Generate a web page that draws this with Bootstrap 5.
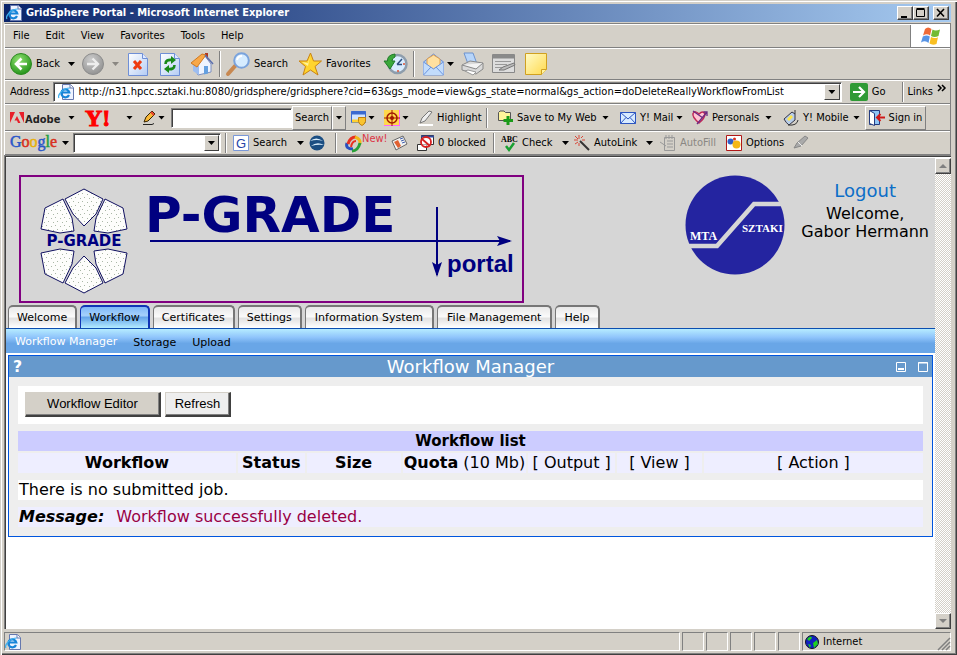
<!DOCTYPE html>
<html lang="en">
<head>
<meta charset="utf-8">
<meta name="viewport" content="width=device-width, initial-scale=1">
<title>GridSphere Portal - Microsoft Internet Explorer</title>
<link rel="stylesheet" href="https://cdn.jsdelivr.net/npm/bootstrap@5.3.0/dist/css/bootstrap.min.css">
<style>
:root{--face:#d4d0c8;--shade:#808080;--deep:#404040}
body{font:11px/14px "DejaVu Sans Condensed","DejaVu Sans",sans-serif;color:#000;background:var(--face);overflow:hidden}
button,input{font:inherit;color:inherit;border:0;background:none;padding:0;border-radius:0;min-width:0}
a{color:inherit;text-decoration:none}
svg{display:block;flex:none;overflow:visible}
.win{border:solid var(--face);border-width:1px 0 0 1px;box-shadow:inset 1px 1px #fff,inset -1px -1px var(--deep),inset -2px -2px var(--shade);padding:3px 6px 3px 3px}
.titlebar{height:18px;background:linear-gradient(90deg,#0a246a,#a6caf0);color:#fff;font:bold 11px/18px "DejaVu Sans Condensed",sans-serif;padding:0 2px}
.winbtn{width:16px;height:14px;background:var(--face);border:1px solid;border-color:#fff var(--deep) var(--deep) #fff;box-shadow:inset -1px -1px var(--shade);display:grid;place-items:center}
.bars{border:1px solid var(--shade);border-left-color:#fff;border-bottom:0;margin-top:1px}
.bar{border-top:1px solid #fff;border-bottom:1px solid var(--shade);padding-left:5px;white-space:nowrap}
.slots{display:grid;align-items:center}
.slots>*{display:flex;align-items:center;gap:4px;text-align:left}
.menu{height:24px;padding-left:0}
.menu a{padding:0 8px}
.flag{width:40px;background:#fff;border-left:1px solid var(--shade)}
.nav-bar{height:32px;grid-template-columns:58px 14px 30px 16px 32px 30px 29px 7px 72px 86px 29px 10px 24px 14px 31px 33px 1fr}
.addr-bar{height:24px}
.y-bar{height:27px;grid-template-columns:58px 15px 43px 16px 16px 13px 121px 40px 18px 18px 16px 18px 16px 68px 12px 104px 18px 56px 16px 73px 18px 70px 12px 61px 1fr}
.g-bar{height:24px;grid-template-columns:52px 11px 148px 12px 60px 16px 26px 10px 46px 26px 76px 8px 61px 12px 72px 14px 66px 67px 1fr}
.caret{width:7px;height:4px;background:currentColor;clip-path:polygon(0 0,100% 0,50% 100%)}
.gray{color:#8a8782}
.rule{width:2px;height:26px;background:linear-gradient(90deg,var(--shade) 50%,#fff 50%)}
.rule.short{height:20px}
.sunken{background:#fff;border:1px solid;border-color:var(--shade) #fff #fff var(--shade);box-shadow:inset 1px 1px var(--deep);height:20px}
.drop{width:16px;height:16px;margin:1px;background:var(--face);border:1px solid;border-color:#fff var(--deep) var(--deep) #fff;display:grid;place-items:center}
.raised{height:24px;border:1px solid;border-color:#fff var(--shade) var(--shade) #fff;justify-content:center}
.view{border:1px solid var(--shade);border-width:1px 0 0 1px;box-shadow:inset 1px 1px var(--deep);padding:2px 0 0 1px;background:#fff;min-height:0}
.vbar{width:16px;background:repeating-conic-gradient(#fff 0 25%,var(--face) 0 50%) 0 0/2px 2px}
.vbar .winbtn{height:16px}
.page{font-family:"DejaVu Sans",Verdana,sans-serif}
.head{background:#d6d6d6;padding:17px 6px 0 13px;height:147px}
.logo-box{border:2px solid purple;width:505px;height:128px}
.user{font-size:16px;line-height:18px;text-align:center;padding-top:6px;margin-left:16px}
.user a{color:#0d6ec8;font-size:18px;line-height:20px}
.tabs{background:#d6d6d6;border-bottom:1px solid #0c4eb0;padding-left:2px;gap:3px;white-space:nowrap}
.tabs a{height:23px;padding:0 8px;border:2px solid #777;border-bottom:0;border-width:2px 2px 0 1px;border-radius:5px 5px 0 0;background:linear-gradient(#e8e8e8,#fafafa 45%,#e2e2e2 55%,#fff);line-height:21px}
.tabs a.long{padding:0 9px}
.tabs a.on{border-color:#1035b5;background:linear-gradient(#7fb8f8,#a5d1fc 40%,#66a6ea 50%,#b4ecff)}
.sub{height:24px;padding:4px 9px 0;gap:16px;background:linear-gradient(#b6ecff,#8fc4fb 35%,#69a6e7 60%)}
.sub .on{color:#fff;padding-bottom:3px}
.portlet{margin:2px 2px 0;border:1px solid #0055dd;background:#eee;font-size:16px;line-height:20px}
.p-title{height:21px;background:#69c;color:#fff;font-size:18px;padding:0 4px}
.p-title>a{width:32px}
.p-body{padding:9px;display:grid;gap:7px}
.tools{background:#fff;height:38px;padding:6px 7px;gap:4px;font:13px/16px "Liberation Sans",Arial,sans-serif}
.tools button{height:25px;border:1px solid var(--face);border-right:2px solid var(--deep);border-bottom:2px solid var(--deep)}
.ed{width:136px;background:var(--face);box-shadow:inset -1px -1px var(--shade)}
.rf{width:66px;background:#eee;box-shadow:inset -1px -1px var(--shade)}
.jobs{border-collapse:separate;border-spacing:0;width:100%;table-layout:fixed;white-space:nowrap}
.jobs th,.jobs td{padding:0;text-align:center;background:#eef;font-weight:400}
.jobs thead th{background:#ccf;font-weight:700;font-size:15px}
.jobs tbody tr>*{border:2px solid #eee;border-width:2px 2px 0 0}
.jobs tbody tr>:last-child{border-right:0}
.line{height:20px;padding-left:1px;white-space:nowrap}
.msg{background:#eef}.msg span{color:#990044}
.status{height:20px;margin-top:3px;gap:2px}
.cell{border:1px solid;border-color:var(--shade) #fff #fff var(--shade);height:19px}
.pane{width:22px}
.zone{width:149px;padding:0 0 0 2px}
</style>
<script src="https://cdn.jsdelivr.net/npm/bootstrap@5.3.0/dist/js/bootstrap.bundle.min.js"></script>
</head>
<body>
<svg width="0" height="0" class="position-absolute">
<defs>
<radialGradient id="gr" cx=".4" cy=".3" r=".8"><stop offset="0" stop-color="#8fe070"/><stop offset="1" stop-color="#178a10"/></radialGradient>
<radialGradient id="gy" cx=".4" cy=".3" r=".8"><stop offset="0" stop-color="#ccc"/><stop offset="1" stop-color="#8c8c8c"/></radialGradient>
<linearGradient id="pg" x2="1" y2="1"><stop offset="0" stop-color="#fff"/><stop offset="1" stop-color="#b4ccf4"/></linearGradient>
<linearGradient id="yl" x2="1" y2="1"><stop offset="0" stop-color="#fffbc8"/><stop offset="1" stop-color="#ffd94c"/></linearGradient>
</defs>
<symbol id="ie" viewBox="0 0 16 16"><path d="M4.500 .5h8l3 3v12h-11z" fill="#eef3ff" stroke="#6678ae"/><path d="M12 .5v3.500h3.500" fill="#fff" stroke="#6678ae"/><path d="M11 11A4 4 0 1 1 11.300 8.500H4.500" fill="none" stroke="#1684d8" stroke-width="2.200"/><path d="M1 14C-1 11 5 4 12 4" fill="none" stroke="#40b0ee" stroke-width="1.200"/></symbol>
<symbol id="doc" viewBox="0 0 20 23"><path d="M.5.5h14l5 5v17H.5z" fill="url(#pg)" stroke="#6f8fd6"/><path d="M14.500.5v5h5" fill="#dfe9ff" stroke="#6f8fd6"/></symbol>
<symbol id="mail" viewBox="0 0 16 12"><path d="M.5.5h15v11H.5z" fill="#d9ebff" stroke="#2d55c0"/><path d="M.5.500 8 7l7.500-6.500M.5 11.500 6 5.500M15.500 11.500 10 5.500" fill="none" stroke="#2d55c0"/></symbol>
</svg>
<div class="win d-flex flex-column vh-100">
  <header class="titlebar d-flex align-items-center">
    <svg width="16" height="16"><use href="#ie"/></svg>
    <span class="ps-1 flex-fill">GridSphere Portal - Microsoft Internet Explorer</span>
    <button class="winbtn" aria-label="Minimize"><svg width="10" height="9"><path d="M1 8h6" stroke="#000" stroke-width="2"/></svg></button>
    <button class="winbtn" aria-label="Maximize"><svg width="10" height="10"><path d="M.5 1.500h8v7h-8zM.5.500h8" fill="none" stroke="#000"/></svg></button>
    <button class="winbtn ms-1" aria-label="Close"><svg width="10" height="8"><path d="m1 0 7 7.500M8 0 1 7.500" stroke="#000" stroke-width="1.600"/></svg></button>
  </header>

  <div class="bars">
    <nav class="bar menu d-flex align-items-stretch" aria-label="Menu">
      <div class="d-flex align-items-center flex-fill">
        <a href="#">File</a><a href="#">Edit</a><a href="#">View</a><a href="#">Favorites</a><a href="#">Tools</a><a href="#">Help</a>
      </div>
      <div class="flag d-grid align-content-center justify-content-center">
        <svg width="20" height="18" viewBox="0 0 20 18"><path d="M4 2q3-3 6.500 0L9 8.500q-3-2.500-7 0z" fill="#ef6a36"/><path d="M11.500 2.500q3 2 7.500 0L17.500 9q-4 2-7.500 0z" fill="#72bb34"/><path d="M1.800 9.500q4-2 7 0L7.500 16q-3-3-7.500-.5z" fill="#5793e4"/><path d="M10 10q3.500 2 7 .2L15.500 17q-4 1.500-7-.5z" fill="#f9bf22"/></svg>
      </div>
    </nav>

    <div class="bar slots nav-bar">
      <button><svg width="22" height="22"><circle cx="11" cy="11" r="10.500" fill="url(#gr)" stroke="#2c8a20"/><path d="M11.500 5.500 6 11l5.500 5.500M6.500 11H17" fill="none" stroke="#fff" stroke-width="2.600"/></svg>Back</button>
      <button aria-label="Back history"><i class="caret"></i></button>
      <button aria-label="Forward"><svg width="22" height="22"><circle cx="11" cy="11" r="10.500" fill="url(#gy)" stroke="#8c8c8c"/><path d="M10.500 5.500 16 11l-5.500 5.500M15.500 11H5" fill="none" stroke="#eee" stroke-width="2.400"/></svg></button>
      <button aria-label="Forward history"><i class="caret gray"></i></button>
      <button aria-label="Stop"><svg width="20" height="23"><use href="#doc"/><path d="m6 8 7 8M13 8l-7 8" stroke="#ee3a10" stroke-width="3"/></svg></button>
      <button aria-label="Refresh page"><svg width="20" height="23"><use href="#doc"/><path d="M5.500 11q0-5 7-4" fill="none" stroke="#188a18" stroke-width="2.600"/><path d="m11 3 5 4-5 4z" fill="#188a18"/><path d="M14.500 12q0 5-7 4" fill="none" stroke="#188a18" stroke-width="2.600"/><path d="m9 12-5 4 5 4z" fill="#188a18"/></svg></button>
      <button aria-label="Home"><svg width="24" height="24"><path d="M15 1h3v7h-3z" fill="#b03820"/><path d="M3 12l5 11 13-3V12l-6-8z" fill="#eef4ff" stroke="#7d8fc0"/><path d="M3 12v7l6 4V14z" fill="#9dbdf0"/><path d="M1 11 12 2l4 1-9 12z" fill="#f8a848" stroke="#d07820"/><path d="m15 3 8 9" stroke="#5b6fae" stroke-width="1.500"/><path d="M14 14h4v7.500l-4 1z" fill="#64a0e0"/></svg></button>
      <span class="rule"></span>
      <button><svg width="24" height="24"><path d="m9 14-7 8" stroke="#c88850" stroke-width="4" stroke-linecap="round"/><circle cx="15.500" cy="8.500" r="7.300" fill="#d6ecff" stroke="#7aa3dc" stroke-width="2"/><path d="M11 8q1-4 5-4" fill="none" stroke="#fff" stroke-width="2"/></svg>Search</button>
      <button><svg width="24" height="24"><path d="m12.500 1 3 8h8l-6.500 5.500 3 8.500-7.500-5L5 23l2.500-8.500L1 9h8z" fill="#ffd42e" stroke="#c98312"/><path d="m12 4-2 7-6-1 6 4" fill="#fff299"/></svg>Favorites</button>
      <button aria-label="History"><svg width="24" height="24"><circle cx="13.500" cy="12" r="9" fill="#d9edff" stroke="#8e9dac" stroke-width="2.500"/><path d="M13 12.500 18 7M13 12.500h5" stroke="#2f4f7f" stroke-width="1.500"/><circle cx="14" cy="19" r="1" fill="#e05030"/><circle cx="20" cy="12" r="1" fill="#e05030"/><path d="M11 2Q3 3 3.500 9H0l6 8 5-8H8q0-3 3-4z" fill="#3ba93a" stroke="#20792a"/></svg></button>
      <span class="rule"></span>
      <button aria-label="Mail"><svg width="21" height="23"><path d="m.5 9 10-8 10 8v13H.5z" fill="#a8ccf6" stroke="#6d8fd4"/><path d="M4 6 10.500 2 17 6v6l-6.500 4L4 12z" fill="#ffe0a0" stroke="#e0a050"/><path d="m.5 9 10 7 10-7v13H.5z" fill="#c2dcfb"/><path d="m.5 9 10 7 10-7M.5 22l7.500-8M20.500 22 13 14" fill="none" stroke="#6d95de"/></svg></button>
      <button aria-label="Mail menu"><i class="caret"></i></button>
      <button aria-label="Print"><svg width="24" height="24"><path d="M3 1h9l4 11H7z" fill="#b7d5fa" stroke="#6d93cf"/><path d="m1 13 8-4 13 2v6l-7 5-14-4z" fill="#d9d9d9" stroke="#888"/><path d="m1 13 14 4 7-6" fill="#f3f3f3" stroke="#888"/><path d="m4 19 3-1 8 2-3 3z" fill="#fff" stroke="#999"/></svg></button>
      <button aria-label="Edit"><svg width="24" height="20"><path d="M.5.5h22v18H.5z" fill="#ddd" stroke="#888"/><path d="M1 2.500h21" stroke="#8a8a8a" stroke-width="4"/><path d="M3 7.500h16M3 10.500h12M3 13.500h7" stroke="#999"/><path d="m7 16 4-3 11-4 1 2-11 5z" fill="#bbb" stroke="#777"/></svg></button>
      <button aria-label="Discuss"><svg width="23" height="22"><path d="M.5.5h21v16l-5 5H.5z" fill="url(#yl)" stroke="#d0a020"/><path d="M16.500 21.500v-5h5" fill="#fff3a0" stroke="#d0a020"/></svg></button>
    </div>

    <div class="bar addr-bar d-flex align-items-center">
      <label for="addr" class="pe-1">Address</label>
      <div class="sunken d-flex flex-fill align-items-center ps-1">
        <svg width="16" height="16"><use href="#ie"/></svg>
        <input id="addr" class="flex-fill ps-1" value="http://n31.hpcc.sztaki.hu:8080/gridsphere/gridsphere?cid=63&amp;gs_mode=view&amp;gs_state=normal&amp;gs_action=doDeleteReallyWorkflowFromList">
        <button class="drop" aria-label="Address list"><i class="caret"></i></button>
      </div>
      <button class="d-flex align-items-center gap-1 ms-2 pe-3"><svg width="18" height="18"><rect width="18" height="18" rx="2" fill="#2f9a35"/><path d="M3 9h11M9 4l5 5-5 5" fill="none" stroke="#fff" stroke-width="2.200"/></svg>Go</button>
      <span class="rule short"></span>
      <a href="#" class="px-1">Links</a>
      <button class="pe-1 pb-2" aria-label="More links"><svg width="9" height="6"><path d="m1 0 3 3-3 3M5 0l3 3-3 3" fill="none" stroke="#000" stroke-width="1.500"/></svg></button>
    </div>

    <div class="bar slots y-bar">
      <button aria-label="Adobe"><svg width="52" height="16"><path d="M0 2h5L0 13zM9 2h5v11zM7 6l3.500 7H8L7 10.500H4.500z" fill="#e8202a"/><text x="15" y="13" font-family="DejaVu Sans Condensed" font-weight="bold" font-size="11" fill="#222">Adobe</text></svg></button>
      <button aria-label="Adobe menu"><i class="caret"></i></button>
      <button aria-label="Yahoo"><svg width="34" height="24"><text x="2" y="20" font-family="Liberation Serif" font-weight="bold" font-size="24" fill="#f00" stroke="#f00">Y!</text></svg></button>
      <button aria-label="Yahoo menu"><i class="caret"></i></button>
      <button aria-label="Edit toolbar"><svg width="15" height="16"><path d="M2 12 4 7l6-6 3 3-7 7z" fill="#f8b838" stroke="#332200"/><path d="m9 2 3 3" stroke="#e84030" stroke-width="2"/><path d="M1 14.500h9l2-1" stroke="#222" fill="none"/></svg></button>
      <button aria-label="Edit menu"><i class="caret"></i></button>
      <input class="sunken w-100 px-1" aria-label="Yahoo search">
      <button class="raised">Search</button>
      <button class="raised me-1" aria-label="Search menu"><i class="caret"></i></button>
      <button aria-label="Pop-up blocker"><svg width="17" height="16"><path d="M1.500 1.500h14v11h-14z" fill="#cfe3ff" stroke="#3a6ad0"/><path d="M1 3h15" stroke="#3a6ad0" stroke-width="3"/><path d="M2 11h8" stroke="#ffd030" stroke-width="3"/><path d="M8.500 7.500h7v4q-1 3-3.500 4-3-1-3.500-4z" fill="#f9c430" stroke="#c08010"/></svg></button>
      <button aria-label="Pop-up menu"><i class="caret"></i></button>
      <button aria-label="Anti-spy"><svg width="16" height="16"><path fill="#ffd84c" d="M0 0h16v16H0z"/><path d="M15.500 0v16M0 15.500h16" stroke="#f6f"/><circle cx="8" cy="8" r="5" fill="none" stroke="#a01800" stroke-width="1.500"/><circle cx="8" cy="8" r="2" fill="#a01800"/><path d="M8 0v16M0 8h16" stroke="#a01800"/></svg></button>
      <button aria-label="Anti-spy menu"><i class="caret"></i></button>
      <button><svg width="15" height="16"><path d="m2 13 2-5 7-7 3 1-7 9z" fill="#eee" stroke="#777"/><path d="M0 15h15" stroke="#fff" stroke-width="2"/></svg>Highlight</button>
      <span class="rule short"></span>
      <button><svg width="15" height="16"><path d="M.5 2.500 2 1h4l1.500 1.500h5v8H.5z" fill="#fff59a" stroke="#555"/><path d="M10 6v9M5.500 10.500H15" stroke="#1a9a18" stroke-width="3"/></svg>Save to My Web</button>
      <button aria-label="My Web menu"><i class="caret"></i></button>
      <button><svg width="16" height="12"><use href="#mail"/></svg>Y! Mail</button>
      <button aria-label="Mail menu"><i class="caret"></i></button>
      <button><svg width="16" height="15"><path d="M7 13Q0 7 1 3.500 3 0 7 4q4-4 6 0 0 4-6 9z" fill="#ffc6d4" stroke="#c02858" stroke-width="1.500"/><path d="M1 1l10 7M5 14 15 2M11.500 2H15v4" fill="none" stroke="#6a2a80" stroke-width="1.300"/></svg>Personals</button>
      <button aria-label="Personals menu"><i class="caret"></i></button>
      <button><svg width="16" height="16"><path d="m1 9 8-7 3 2v6l-6 5q-3-2-5-6z" fill="#b8cde8" stroke="#334"/><path d="m4 9 4-4 2 2-4 4z" fill="#ffe648"/><path d="M12 4V0M5 15q9 1 10-5" stroke="#333" fill="none"/></svg>Y! Mobile</button>
      <button aria-label="Mobile menu"><i class="caret"></i></button>
      <button class="raised"><svg width="16" height="16"><path d="M.5.5h10v14H.5z" fill="#8fc4f4" stroke="#223a80"/><path d="m.5.5 5 3v12l-5-2z" fill="#fff" stroke="#223a80"/><path d="M16 7.500H8M11.500 4 8 7.500l3.500 3.500" stroke="#d01818" stroke-width="2" fill="none"/></svg>Sign in</button>
    </div>

    <div class="bar slots g-bar">
      <button aria-label="Google"><svg width="49" height="20"><text y="14" font-family="Liberation Serif" font-size="16" stroke-width=".5"><tspan fill="#2a56c8" stroke="#2a56c8">G</tspan><tspan fill="#d83020" stroke="#d83020">o</tspan><tspan fill="#e8b010" stroke="#e8b010">o</tspan><tspan fill="#2a56c8" stroke="#2a56c8">g</tspan><tspan fill="#20a040" stroke="#20a040">l</tspan><tspan fill="#d83020" stroke="#d83020">e</tspan></text></svg></button>
      <button aria-label="Google menu"><i class="caret"></i></button>
      <div class="sunken"><input class="flex-fill px-1" aria-label="Google search"><button class="drop" aria-label="Search history"><i class="caret"></i></button></div>
      <span class="rule short ms-1"></span>
      <button><svg width="16" height="16"><path d="M.5.5h15v15H.5z" fill="#fff" stroke="#7a98d8"/><text x="3" y="13" font-family="Liberation Sans" font-size="13" fill="#2444a8">G</text></svg>Search</button>
      <button class="ps-1" aria-label="Search type"><i class="caret"></i></button>
      <button aria-label="Earth"><svg width="16" height="16"><circle cx="8" cy="8" r="7.500" fill="#1b4e82"/><path d="M1 6q6-5 13 0-6-2-13 0M2 11q6-5 13-1-6-1-13 1" fill="#d8ecfa"/></svg></button>
      <span class="rule short"></span>
      <button class="gap-0"><svg width="17" height="17" fill="none" stroke-width="3"><path d="M8 14Q0 14 2 8" stroke="#2850c0"/><path d="M3 9q2-7 8-7" stroke="#e83020"/><path d="M10 2q6 2 5 7" stroke="#f0b818"/><path d="M15 8q-2 8-8 8" stroke="#28a038"/><path d="M6 12q1-6 5-6" stroke="#e83020" stroke-width="2"/></svg><span class="text-danger pb-2">New!</span></button>
      <button aria-label="News"><svg width="17" height="16"><path d="m1 6 11-5 4 8-11 6z" fill="#f1f1f1" stroke="#666"/><path d="m3 7 4-2 3 6-3 2z" fill="#e06030"/><path d="m9 4 3-1M10 6l3-1M11 8l3-1" stroke="#4060b0"/></svg></button>
      <button><svg width="17" height="16"><path d="M4.500.5h12v9h-12zM.5 9.500h9v6h-9z" fill="#fff" stroke="#333"/><path d="M4 1.500h13" stroke="#30489a" stroke-width="2"/><circle cx="9" cy="7" r="5" fill="#fff" fill-opacity=".6" stroke="#d82020" stroke-width="1.800"/><path d="m5 4 8 7" stroke="#d82020" stroke-width="1.800"/></svg>0 blocked</button>
      <span class="rule short"></span>
      <button><svg width="17" height="17"><text y="7" font-family="Liberation Serif" font-weight="bold" font-size="8">ABC</text><path d="m5 11 3 4 5-7" fill="none" stroke="#18a030" stroke-width="2.500"/></svg>Check</button>
      <button aria-label="Check menu"><i class="caret"></i></button>
      <button><svg width="16" height="16"><path d="m6 6 9 9" stroke="#333" stroke-width="2"/><path d="M5 0v4M5 8v3M0 5h4M8 5h3M1 1l3 3M9 1 7 3M1 9l3-2" stroke="#d84838"/></svg>AutoLink</button>
      <button aria-label="AutoLink menu"><i class="caret"></i></button>
      <button class="gray" disabled><svg width="16" height="16" fill="none" stroke="#999"><path d="M4.500 2.500h10v13h-10zM7 6h6M7 9h6M7 12h6M0 7l6 4M6 0v4M9 0v4M12 0v4"/></svg>AutoFill</button>
      <button><svg width="16" height="16"><path d="M.5.5h15v15H.5z" fill="#fff" stroke="#b01818"/><circle cx="4.500" cy="6.500" r="3" fill="#3060c8"/><circle cx="10.500" cy="9.500" r="4" fill="#f4b818"/><circle cx="8.500" cy="4" r="1.500" fill="#d83020"/></svg>Options</button>
      <button aria-label="Highlight"><svg width="16" height="16"><path d="m1 13 3-5 8-7 3 2-7 8z" fill="#aaa" stroke="#888"/><path d="m5 7 4 4" stroke="#eee"/></svg></button>
    </div>
  </div>

  <div class="view d-flex flex-fill">
    <main class="page flex-fill">
      <div class="head d-flex">
        <div class="logo-box">
          <svg width="501" height="124" viewBox="21 177 501 124" role="img" aria-label="P-GRADE portal">
            <defs><pattern id="dots" width="9" height="8" patternUnits="userSpaceOnUse"><path fill="#fdfdfb" d="M0 0h9v8H0z"/><path d="M1 1h1v1H1zM6 2h1v1H6zM3 5h1v1H3zM8 6h1v1H8z" fill="#aab7a6"/></pattern></defs>
            <g fill="url(#dots)" stroke="#101060">
              <path d="m84 189 19 10-7 15-12 12-11-12-8-15z"/><path d="m63 199-18 9-4 21 19 4 14-2-2-13z"/><path d="m105 199 18 9 4 21-19 4-14-2 2-13z"/>
              <path d="m84 293 19-10-7-15-12-12-11 12-8 15z"/><path d="m63 283-18-9-4-21 19-4 14 2-2 13z"/><path d="m105 283 18-9 4-21-19-4-14 2 2 13z"/>
            </g>
            <g fill="navy" font-weight="bold">
              <text x="84" y="246" font-size="15" text-anchor="middle" font-family="DejaVu Sans">P-GRADE</text>
              <text x="145" y="232" font-size="50" font-family="DejaVu Sans">P-GRADE</text>
              <text x="447" y="272" font-size="24" font-family="Liberation Sans">portal</text>
            </g>
            <path d="M150 241h360M437 207v68" stroke="navy" stroke-width="2"/>
            <path d="m497 236 15 5-15 5 3-5zM432 262l5 15 5-15-5 3z" fill="navy"/>
          </svg>
        </div>
        <svg class="ms-auto" width="100" height="100" role="img" aria-label="MTA SZTAKI"><circle cx="50" cy="50" r="49.500" fill="#2424a0"/><path d="M4 71h28L69 29h28" fill="none" stroke="#d6d6d6" stroke-width="4.500"/><g fill="#fff" font-family="Liberation Serif" font-weight="bold"><text x="5" y="65" font-size="12">MTA</text><text x="57" y="57" font-size="11">SZTAKI</text></g></svg>
        <div class="user"><a href="#">Logout</a><div class="mt-1">Welcome,<br>Gabor Hermann</div></div>
      </div>
      <nav class="tabs d-flex" aria-label="Portal"><a href="#">Welcome</a><a href="#" class="on">Workflow</a><a href="#">Certificates</a><a href="#">Settings</a><a href="#" class="long">Information System</a><a href="#" class="long">File Management</a><a href="#">Help</a></nav>
      <nav class="sub d-flex align-items-center" aria-label="Workflow"><a href="#" class="on">Workflow Manager</a><a href="#">Storage</a><a href="#">Upload</a></nav>

      <section class="portlet">
        <header class="p-title d-flex align-items-center">
          <a href="#" class="small"><b>?</b></a><span class="flex-fill text-center">Workflow Manager</span>
          <button aria-label="Minimize portlet"><svg width="10" height="10"><path d="M.5.5h9v9h-9z" fill="none" stroke="#fff"/><path d="M2 7h6" stroke="#fff" stroke-width="2"/></svg></button>
          <button class="ms-2 ps-1" aria-label="Maximize portlet"><svg width="10" height="10"><path d="M.5.5h9v9h-9zM0 1h10" fill="none" stroke="#fff"/></svg></button>
        </header>
        <div class="p-body">
          <div class="tools d-flex"><button class="ed">Workflow Editor</button><button class="rf">Refresh</button></div>
          <table class="jobs">
            <colgroup><col style="width:24.300%"><col style="width:7.600%"><col style="width:10.600%"><col style="width:13.900%"><col style="width:9.800%"><col style="width:9.600%"><col></colgroup>
            <thead><tr><th colspan="7">Workflow list</th></tr></thead>
            <tbody><tr><td><b>Workflow</b></td><td><b>Status</b></td><td><b>Size</b></td><td><b>Quota</b> (10 Mb)</td><td>[ Output ]</td><td>[ View ]</td><td>[ Action ]</td></tr></tbody>
          </table>
          <div class="line bg-white">There is no submitted job.</div>
          <div class="line msg"><b><i>Message:</i></b><span class="ms-2 ps-1">Workflow successfully deleted.</span></div>
        </div>
      </section>
    </main>
    <div class="vbar d-flex flex-column justify-content-between">
      <button class="winbtn" aria-label="Scroll up"><svg width="8" height="5"><path d="m0 4 4-4 4 4z" fill="#808080"/></svg></button>
      <button class="winbtn" aria-label="Scroll down"><svg width="8" height="5"><path d="m0 0 4 4 4-4z" fill="#808080"/></svg></button>
    </div>
  </div>

  <footer class="status d-flex">
    <div class="cell flex-fill d-flex align-items-center"><svg width="16" height="16"><use href="#ie"/></svg></div>
    <div class="cell pane"></div><div class="cell pane"></div><div class="cell pane"></div><div class="cell pane"></div><div class="cell pane"></div>
    <div class="cell zone d-flex align-items-center gap-1"><svg width="14" height="14"><circle cx="7" cy="7" r="6.500" fill="#1020c0" stroke="#112"/><path d="M2 4q4-4 5-1L4 6zM8 8l4-3 1 4-4 4zM3 9l3 1-1 3z" fill="#20d020"/></svg><span class="flex-fill">Internet</span>
      <svg class="align-self-end" width="12" height="12"><path d="M0 12 12 0M4 12l8-8M8 12l4-4" stroke="#808080" stroke-width="1.500"/></svg></div>
  </footer>
</div>
</body>
</html>
